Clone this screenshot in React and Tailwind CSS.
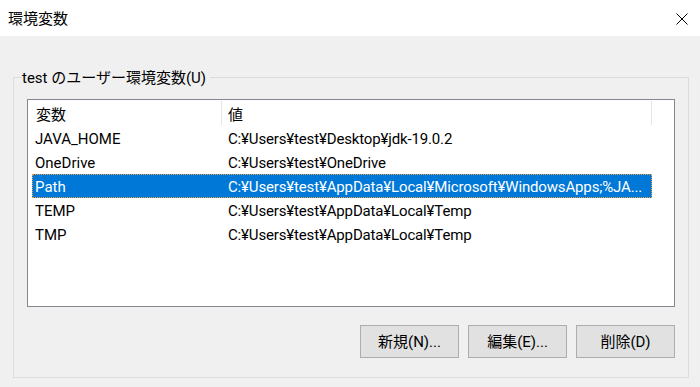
const rows = [
  { name: 'JAVA_HOME', value: 'C:¥Users¥test¥Desktop¥jdk-19.0.2' },
  { name: 'OneDrive', value: 'C:¥Users¥test¥OneDrive' },
  { name: 'Path', value: 'C:¥Users¥test¥AppData¥Local¥Microsoft¥WindowsApps;%JA...', selected: true },
  { name: 'TEMP', value: 'C:¥Users¥test¥AppData¥Local¥Temp' },
  { name: 'TMP', value: 'C:¥Users¥test¥AppData¥Local¥Temp' },
];

const buttons = ['新規(N)...', '編集(E)...', '削除(D)'];

const App = () => {
  return (
    <div className="w-[700px] h-[387px] bg-[#f0f0f0] text-black text-[15px] leading-[20px] font-['Roboto','Noto_Sans_CJK_JP',sans-serif] overflow-hidden">
      {/* title bar */}
      <div className="h-[36px] bg-white flex items-center justify-between pl-[8px] pr-[12px] pt-[1px]">
        <span>環境変数</span>
        <svg width="12" height="12" viewBox="0 0 12 12" className="text-black">
          <path d="M0.5 0.5 L11.5 11.5 M11.5 0.5 L0.5 11.5" stroke="currentColor" strokeWidth="1" fill="none" />
        </svg>
      </div>

      {/* group box */}
      <div className="relative mt-[41px] ml-[13px] w-[676px] h-[301px] border border-[#dcdcdc] px-[13px] pt-[21px]">
        <span className="absolute left-[8px] -top-[10px] bg-[#f0f0f0] pr-[4px]">test のユーザー環境変数(U)</span>

        {/* list view */}
        <div className="h-[208px] border border-[#828790] bg-white">
          <div className="flex h-[26px] items-stretch">
            <div className="w-[194px] flex items-center pl-[8px] pt-[4px] border-r border-[#e5e5e5] my-[1px]">変数</div>
            <div className="w-[430px] flex items-center pl-[6px] pt-[4px] border-r border-[#e5e5e5] my-[1px]">値</div>
          </div>
          {rows.map((r) => (
            <div
              key={r.name}
              className={
                r.selected
                  ? 'flex items-center h-[24px] pt-[2px] ml-[4px] w-[620px] bg-[#0078d7] text-white outline-1 outline-dotted outline-[#f0a040] -outline-offset-1'
                  : 'flex items-center h-[24px] pt-[2px] ml-[4px] w-[620px]'
              }
            >
              <div className="w-[190px] pl-[3px] whitespace-nowrap">{r.name}</div>
              <div className="flex-1 pl-[6px] whitespace-nowrap overflow-hidden tracking-[-0.15px]">{r.value}</div>
            </div>
          ))}
        </div>

        {/* buttons */}
        <div className="flex justify-end gap-[9px] mt-[18px]">
          {buttons.map((b) => (
            <button
              key={b}
              className="w-[99px] h-[33px] bg-[#e1e1e1] border border-[#adadad] flex items-center justify-center"
            >
              {b}
            </button>
          ))}
        </div>
      </div>
    </div>
  );
};

export default App;
